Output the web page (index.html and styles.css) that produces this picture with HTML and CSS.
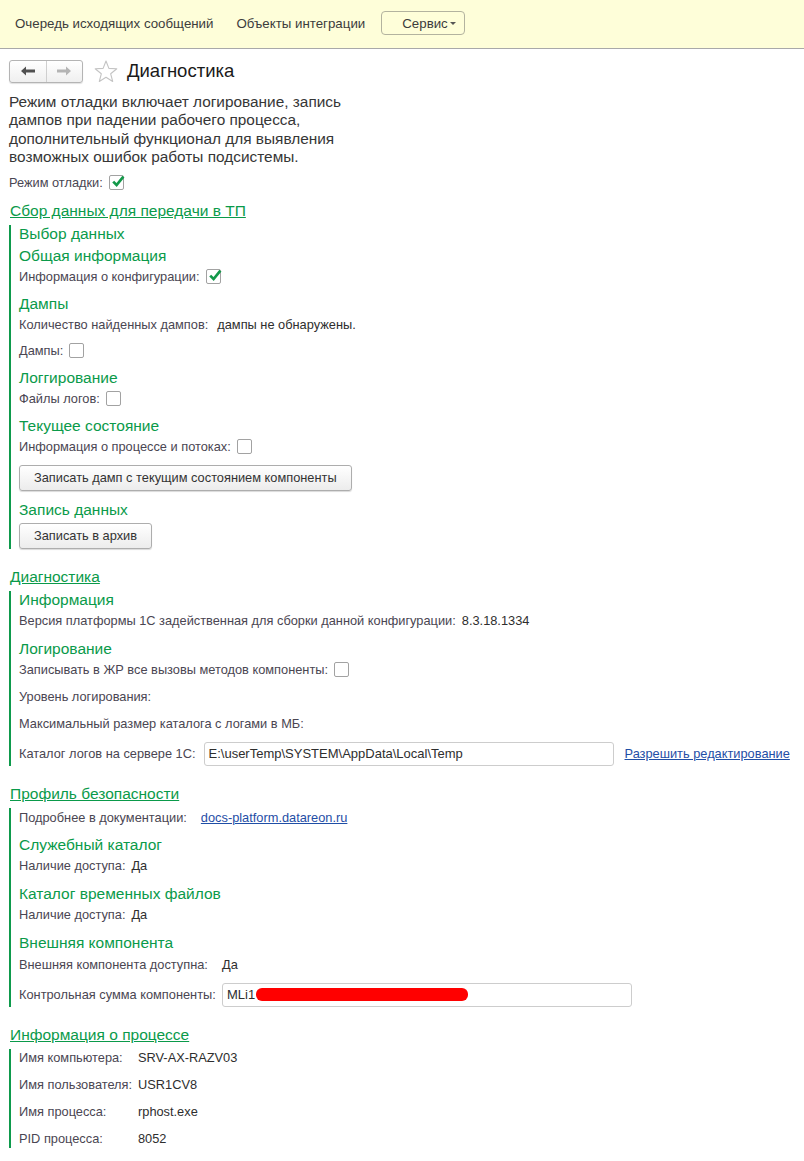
FILE: index.html
```html
<!DOCTYPE html>
<html lang="ru">
<head>
    <meta charset="UTF-8">
    <meta name="viewport" content="width=device-width, initial-scale=1.0">
    <title>Диагностика</title>
    <link rel="stylesheet" href="styles.css">
</head>
<body>
    <div class="topbar">
        <a href="#" class="cmd">Очередь исходящих сообщений</a>
        <a href="#" class="cmd">Объекты интеграции</a>
        <button class="menu-btn">Сервис <span class="caret"></span></button>
    </div>

    <div class="form">
        <div class="title-row">
            <div class="nav-btns">
                <span class="nav-btn">
                    <svg width="14" height="10" viewBox="0 0 14 10"><path d="M0 5 L5 0.5 L5 3.6 L14 3.6 L14 6.4 L5 6.4 L5 9.5 Z" fill="#505050"/></svg>
                </span>
                <span class="nav-btn">
                    <svg width="14" height="10" viewBox="0 0 14 10"><path d="M14 5 L9 0.5 L9 3.6 L0 3.6 L0 6.4 L9 6.4 L9 9.5 Z" fill="#b4b4b4"/></svg>
                </span>
            </div>
            <svg class="star" width="24" height="23" viewBox="0 0 24 23"><path d="M12 1 L14.9 8.4 L22.8 8.8 L16.7 13.8 L18.7 21.5 L12 17.2 L5.3 21.5 L7.3 13.8 L1.2 8.8 L9.1 8.4 Z" fill="none" stroke="#c4c4c4" stroke-width="1.1" stroke-linejoin="round"/></svg>
            <h1 class="page-title">Диагностика</h1>
        </div>

        <p class="desc">Режим отладки включает логирование, запись дампов при падении рабочего процесса, дополнительный функционал для выявления возможных ошибок работы подсистемы.</p>

        <div class="field">
            <span class="label">Режим отладки:</span>
            <span class="check on"><svg width="16" height="16" viewBox="0 0 16 16"><path d="M3.2 7.6 L6.6 11 L13.4 2.6" fill="none" stroke="#13994a" stroke-width="2.7"/></svg></span>
        </div>

        <div class="section">
            <div class="section-title"><a href="#">Сбор данных для передачи в ТП</a></div>
            <div class="group">
                <div class="group-title">Выбор данных</div>
                <div class="group-title">Общая информация</div>
                <div class="field">
                    <span class="label">Информация о конфигурации:</span>
                    <span class="check on"><svg width="16" height="16" viewBox="0 0 16 16"><path d="M3.2 7.6 L6.6 11 L13.4 2.6" fill="none" stroke="#13994a" stroke-width="2.7"/></svg></span>
                </div>
                <div class="group-title">Дампы</div>
                <div class="field">
                    <span class="label">Количество найденных дампов:</span>
                    <span class="value gap-9">дампы не обнаружены.</span>
                </div>
                <div class="field">
                    <span class="label">Дампы:</span>
                    <span class="check"></span>
                </div>
                <div class="group-title">Логгирование</div>
                <div class="field">
                    <span class="label">Файлы логов:</span>
                    <span class="check"></span>
                </div>
                <div class="group-title">Текущее состояние</div>
                <div class="field">
                    <span class="label">Информация о процессе и потоках:</span>
                    <span class="check"></span>
                </div>
                <button class="btn">Записать дамп с текущим состоянием компоненты</button>
                <div class="group-title">Запись данных</div>
                <button class="btn">Записать в архив</button>
            </div>
        </div>

        <div class="section">
            <div class="section-title"><a href="#">Диагностика</a></div>
            <div class="group">
                <div class="group-title">Информация</div>
                <div class="field tall">
                    <span class="label">Версия платформы 1С задейственная для сборки данной конфигурации:</span>
                    <span class="value gap-6">8.3.18.1334</span>
                </div>
                <div class="group-title">Логирование</div>
                <div class="field tall">
                    <span class="label">Записывать в ЖР все вызовы методов компоненты:</span>
                    <span class="check"></span>
                </div>
                <div class="field tall">
                    <span class="label">Уровень логирования:</span>
                </div>
                <div class="field">
                    <span class="label">Максимальный размер каталога с логами в МБ:</span>
                </div>
                <div class="input-row">
                    <span class="label">Каталог логов на сервере 1С:</span>
                    <div class="input">E:\userTemp\SYSTEM\AppData\Local\Temp</div>
                    <a href="#" class="link">Разрешить редактирование</a>
                </div>
            </div>
        </div>

        <div class="section">
            <div class="section-title"><a href="#">Профиль безопасности</a></div>
            <div class="group pad-top">
                <div class="field">
                    <span class="label">Подробнее в документации:</span>
                    <a href="#" class="link gap-14">docs-platform.datareon.ru</a>
                </div>
                <div class="group-title">Служебный каталог</div>
                <div class="field tall">
                    <span class="label">Наличие доступа:</span>
                    <span class="value gap-6">Да</span>
                </div>
                <div class="group-title">Каталог временных файлов</div>
                <div class="field tall">
                    <span class="label">Наличие доступа:</span>
                    <span class="value gap-6">Да</span>
                </div>
                <div class="group-title">Внешняя компонента</div>
                <div class="pair-grid">
                    <span class="label">Внешняя компонента доступна:</span>
                    <span class="value">Да</span>
                    <span class="label">Контрольная сумма компоненты:</span>
                    <div class="input masked">MLi1<span class="redact"></span></div>
                </div>
            </div>
        </div>

        <div class="section">
            <div class="section-title"><a href="#">Информация о процессе</a></div>
            <div class="group">
                <div class="info-grid">
                    <span class="label">Имя компьютера:</span>
                    <span class="value">SRV-AX-RAZV03</span>
                    <span class="label">Имя пользователя:</span>
                    <span class="value">USR1CV8</span>
                    <span class="label">Имя процесса:</span>
                    <span class="value">rphost.exe</span>
                    <span class="label">PID процесса:</span>
                    <span class="value">8052</span>
                </div>
            </div>
        </div>
    </div>
</body>
</html>
```

FILE: styles.css
```css
:root {
    --green: #0a9a4a;
    --green-line: #0e9a4c;
    --label: #4a4652;
    --value: #2e2e2e;
    --link: #1f4ea6;
    --border: #b4b4b4;
}

* {
    margin: 0;
    padding: 0;
    box-sizing: border-box;
}

body {
    font-family: "Liberation Sans", Arial, sans-serif;
    font-size: 12.8px;
    color: var(--value);
    background: #fff;
}

/* Command bar */
.topbar {
    height: 49px;
    background: #fefed9;
    border-bottom: 1px solid #a9a9a9;
    display: flex;
    align-items: center;
    padding: 0 0 2px 15px;
}

.cmd {
    color: #3c3c3c;
    text-decoration: none;
    font-size: 13.3px;
}

.cmd + .cmd {
    margin-left: 23px;
}

.menu-btn {
    height: 24px;
    width: 84px;
    margin-left: 16px;
    padding: 0 8px 0 20px;
    border: 1px solid #b3b39f;
    border-radius: 4px;
    background: #fefed9;
    font-family: inherit;
    font-size: 13.3px;
    color: #3c3c3c;
    display: flex;
    align-items: center;
    justify-content: space-between;
}

.caret {
    width: 0;
    height: 0;
    border-left: 3px solid transparent;
    border-right: 3px solid transparent;
    border-top: 3px solid #555;
}

/* Form */
.form {
    padding: 10px 9px 0;
}

.title-row {
    display: flex;
    align-items: center;
    height: 24px;
}

.nav-btns {
    display: flex;
    width: 74px;
    height: 23px;
    border: 1px solid var(--border);
    border-radius: 3px;
    background: linear-gradient(#ffffff, #efefef);
    box-shadow: 0 1px 1px rgba(0, 0, 0, 0.12);
}

.nav-btn {
    flex: 1;
    display: flex;
    align-items: center;
    justify-content: center;
}

.nav-btn + .nav-btn {
    border-left: 1px solid #cfcfcf;
}

.star {
    margin-left: 11px;
}

.page-title {
    margin-left: 9px;
    font-size: 18.5px;
    font-weight: normal;
    color: #1a1a1a;
}

.desc {
    margin: 10px 0 8px;
    width: 352px;
    font-size: 15.4px;
    line-height: 18.4px;
    color: #363636;
}

.field {
    display: flex;
    align-items: center;
    height: 16px;
    margin-bottom: 10px;
    white-space: nowrap;
}

.field.tall {
    margin-bottom: 11px;
}

.label {
    color: var(--label);
    white-space: nowrap;
}

.value {
    color: var(--value);
    white-space: nowrap;
}

.gap-6 { margin-left: 6px; }
.gap-9 { margin-left: 9px; }
.gap-14 { margin-left: 14px; }

.check {
    position: relative;
    width: 15px;
    height: 15px;
    margin-left: 6px;
    border: 1px solid #a2a2a2;
    border-radius: 2px;
    background: #fff;
}

.check svg {
    position: absolute;
    left: 0;
    top: -2px;
}

/* Sections */
.section {
    margin-bottom: 18px;
}

.section-title {
    height: 20px;
    line-height: 20px;
    margin: 0 0 4px 1px;
    font-size: 15.5px;
}

.section-title a {
    color: var(--green);
    text-decoration: underline;
}

.group {
    border-left: 2px solid var(--green-line);
    padding-left: 8px;
}

.group.pad-top {
    padding-top: 2px;
}

.group > :last-child {
    margin-bottom: 0;
}

.group-title {
    height: 18px;
    line-height: 18px;
    margin-bottom: 4px;
    font-size: 15.5px;
    color: var(--green);
}

.btn {
    display: block;
    height: 26px;
    padding: 0 14px;
    margin-bottom: 10px;
    border: 1px solid #adadad;
    border-radius: 3px;
    background: linear-gradient(#ffffff, #ececec);
    box-shadow: 0 1px 1px rgba(0, 0, 0, 0.15);
    font-family: inherit;
    font-size: 12.8px;
    color: #333;
}

.input-row {
    display: flex;
    align-items: center;
    height: 24px;
}

.input {
    position: relative;
    flex-shrink: 0;
    width: 410px;
    height: 24px;
    line-height: 22px;
    padding: 0 4px;
    border: 1px solid #cdcdcd;
    border-radius: 3px;
    background: #fff;
    color: #2e2e2e;
    font-size: 13px;
    white-space: nowrap;
}

.input-row .input {
    margin-left: 8px;
}

.link {
    color: var(--link);
    text-decoration: underline;
    white-space: nowrap;
}

.input-row .link {
    margin-left: 11px;
}

.pair-grid {
    display: grid;
    grid-template-columns: 203px auto;
    justify-items: start;
    align-items: center;
    row-gap: 11px;
    padding-top: 1px;
}

.redact {
    position: absolute;
    left: 33px;
    top: 4px;
    width: 212px;
    height: 13px;
    border-radius: 6px;
    background: #ff0000;
}

.info-grid {
    display: grid;
    grid-template-columns: 119px auto;
    grid-auto-rows: 18px;
    row-gap: 9px;
    align-items: center;
}
```
